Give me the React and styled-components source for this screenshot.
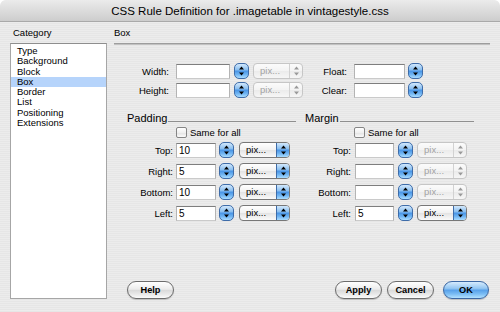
import React from "react";
import styled, { createGlobalStyle, css } from "styled-components";

const Global = createGlobalStyle`
  html, body { margin: 0; padding: 0; background: #ffffff; }
  body { width: 500px; height: 312px; overflow: hidden; font-family: "Liberation Sans", Arial, sans-serif; color: #000; }
  * { box-sizing: border-box; }
`;

const Window = styled.div`
  width: 500px;
  height: 312px;
  display: flex;
  flex-direction: column;
  border-radius: 6px 6px 0 0;
  overflow: hidden;
  background: repeating-linear-gradient(180deg, #ececec 0px, #ececec 1px, #e6e6e6 1px, #e6e6e6 2px);
`;

const TitleBar = styled.div`
  height: 22px;
  flex-shrink: 0;
  display: flex;
  align-items: center;
  justify-content: center;
  font-size: 11.5px;
  background: linear-gradient(180deg, #ebebeb 0%, #dcdcdc 50%, #cdcdcd 100%);
  border-bottom: 1px solid #a9a9a9;
  border-radius: 6px 6px 0 0;
`;

const Body = styled.div`
  flex: 1;
  display: flex;
  gap: 7px;
  padding: 4px 10px 13px 10px;
`;

const Sidebar = styled.div`
  width: 97px;
  display: flex;
  flex-direction: column;
`;

const SectionLabel = styled.div`
  height: 14px;
  line-height: 14px;
  font-size: 9.5px;
  padding-left: ${(p) => p.$indent || 0}px;
`;

const List = styled.div`
  margin-top: 3px;
  flex: 1;
  background: #fff;
  border: 1px solid #a6a6a6;
  border-top-color: #8e8e8e;
  padding-top: 2px;
`;

const ListItem = styled.div`
  height: 10.3px;
  line-height: 10.3px;
  padding-left: 6px;
  font-size: 9.5px;
  background: ${(p) => (p.$selected ? "#b6d4fb" : "transparent")};
`;

const Main = styled.div`
  flex: 1;
  display: flex;
  flex-direction: column;
`;

const Separator = styled.div`
  margin-top: 3px;
  height: 2px;
  border-top: 1px solid #9d9d9d;
  border-bottom: 1px solid #c2c2c2;
`;

const TopForm = styled.div`
  margin-top: 18px;
  display: flex;
  flex-direction: column;
  gap: 3px;
`;

const Row = styled.div`
  display: flex;
  align-items: center;
  height: 16px;
`;

const FieldLabel = styled.div`
  width: ${(p) => p.$w}px;
  margin-right: ${(p) => p.$gap}px;
  text-align: right;
  font-size: 9.5px;
  flex-shrink: 0;
  white-space: nowrap;
`;

const TextField = styled.input`
  width: ${(p) => p.$w}px;
  height: 15px;
  flex-shrink: 0;
  border: 1px solid;
  border-color: #7e7e7e #b4b4b4 #cacaca #b4b4b4;
  background: #fff;
  font-family: "Liberation Sans", Arial, sans-serif;
  font-size: 10px;
  padding: 0 2px;
  margin: 0;
  outline: none;
  color: #000;
`;

const blueGrad = css`
  background: linear-gradient(180deg, #d2e8fc 0%, #8cc0f0 40%, #4b96e6 52%, #6fb4f2 75%, #a9dcff 100%);
`;

const StepperBox = styled.div`
  width: 15px;
  height: 16px;
  flex-shrink: 0;
  margin-left: ${(p) => p.$ml}px;
  border: 1px solid #3e6ca9;
  border-radius: 5px;
  ${blueGrad};
  display: flex;
  align-items: center;
  justify-content: center;
`;

const Arrows = ({ color = "#000" }) => (
  <svg width="7" height="10" viewBox="0 0 7 10">
    <polygon points="3.5,0.5 6,3.5 1,3.5" fill={color} />
    <polygon points="1,6.5 6,6.5 3.5,9.5" fill={color} />
  </svg>
);

const Stepper = ({ ml }) => (
  <StepperBox $ml={ml}>
    <Arrows />
  </StepperBox>
);

const SelectBox = styled.div`
  width: ${(p) => p.$w}px;
  height: 16px;
  flex-shrink: 0;
  margin-left: ${(p) => p.$ml}px;
  display: flex;
  border: 1px solid ${(p) => (p.$disabled ? "#c6c6c6" : "#777")};
  border-radius: 4px;
  overflow: hidden;
  background: ${(p) =>
    p.$disabled
      ? "linear-gradient(180deg, #fbfbfb 0%, #f3f3f3 50%, #ebebeb 51%, #f6f6f6 100%)"
      : "linear-gradient(180deg, #ffffff 0%, #f1f1f1 50%, #e3e3e3 51%, #fafafa 100%)"};
`;

const SelectText = styled.div`
  flex: 1;
  font-size: 9.5px;
  line-height: 14px;
  padding-left: 6px;
  color: ${(p) => (p.$disabled ? "#a3a3a3" : "#000")};
`;

const SelectCap = styled.div`
  width: 13px;
  display: flex;
  align-items: center;
  justify-content: center;
  border-left: 1px solid ${(p) => (p.$disabled ? "#d2d2d2" : "#3e6ca9")};
  ${(p) => !p.$disabled && blueGrad};
`;

const Select = ({ w, ml, disabled }) => (
  <SelectBox $w={w} $ml={ml} $disabled={disabled}>
    <SelectText $disabled={disabled}>pix...</SelectText>
    <SelectCap $disabled={disabled}>
      <Arrows color={disabled ? "#999" : "#000"} />
    </SelectCap>
  </SelectBox>
);

const Columns = styled.div`
  margin-top: 12px;
  margin-left: 13px;
  display: flex;
  gap: 9px;
`;

const Column = styled.div`
  width: 169px;
  display: flex;
  flex-direction: column;
`;

const Heading = styled.div`
  height: 16px;
  display: flex;
  align-items: center;
  font-size: 11px;
`;

const HeadingRule = styled.div`
  flex: 1;
  height: 1px;
  margin-left: 1px;
  margin-top: 6px;
  background: #8f8f8f;
`;

const CheckRow = styled.div`
  height: 12px;
  display: flex;
  align-items: center;
  padding-left: 49px;
  font-size: 9.5px;
`;

const Checkbox = styled.div`
  width: 11px;
  height: 11px;
  border: 1px solid #858585;
  border-radius: 2px;
  background: linear-gradient(180deg, #ffffff 0%, #f0f0f0 50%, #e2e2e2 51%, #fbfbfb 100%);
  margin-right: 3px;
`;

const Fields = styled.div`
  margin-top: 4px;
  display: flex;
  flex-direction: column;
  gap: 5px;
`;

const ButtonRow = styled.div`
  margin-top: auto;
  height: 18px;
  display: flex;
  align-items: center;
  padding-left: 13px;
  padding-right: 1px;
`;

const Spacer = styled.div`
  flex: 1;
`;

const Button = styled.div`
  width: ${(p) => p.$w}px;
  height: 18px;
  margin-left: ${(p) => p.$ml || 0}px;
  border-radius: 9px;
  border: 1px solid ${(p) => (p.$primary ? "#3b67a3" : "#6c6c6c")};
  display: flex;
  align-items: center;
  justify-content: center;
  font-size: 9.2px;
  font-weight: bold;
  box-shadow: 0 1px 1px rgba(0, 0, 0, 0.18);
  background: ${(p) =>
    p.$primary
      ? "linear-gradient(180deg, #d6ebfd 0%, #93c6f2 40%, #5aa2ea 52%, #7bbdf4 75%, #b3e1ff 100%)"
      : "linear-gradient(180deg, #ffffff 0%, #ececec 45%, #dadada 52%, #e8e8e8 75%, #fbfbfb 100%)"};
`;

const categories = ["Type", "Background", "Block", "Box", "Border", "List", "Positioning", "Extensions"];

const padding = [
  { label: "Top:", value: "10" },
  { label: "Right:", value: "5" },
  { label: "Bottom:", value: "10" },
  { label: "Left:", value: "5" },
];

const margin = [
  { label: "Top:", value: "" },
  { label: "Right:", value: "" },
  { label: "Bottom:", value: "" },
  { label: "Left:", value: "5" },
];

export default function App() {
  return (
    <>
      <Global />
      <Window>
        <TitleBar>CSS Rule Definition for .imagetable in vintagestyle.css</TitleBar>
        <Body>
          <Sidebar>
            <SectionLabel $indent={3}>Category</SectionLabel>
            <List>
              {categories.map((c) => (
                <ListItem key={c} $selected={c === "Box"}>
                  {c}
                </ListItem>
              ))}
            </List>
          </Sidebar>
          <Main>
            <SectionLabel>Box</SectionLabel>
            <Separator />
            <TopForm>
              <Row>
                <FieldLabel $w={55} $gap={7}>Width:</FieldLabel>
                <TextField $w={54} readOnly value="" />
                <Stepper ml={4} />
                <Select w={50} ml={4} disabled />
                <FieldLabel $w={44} $gap={7}>Float:</FieldLabel>
                <TextField $w={51} readOnly value="" />
                <Stepper ml={3} />
              </Row>
              <Row>
                <FieldLabel $w={55} $gap={7}>Height:</FieldLabel>
                <TextField $w={54} readOnly value="" />
                <Stepper ml={4} />
                <Select w={50} ml={4} disabled />
                <FieldLabel $w={44} $gap={7}>Clear:</FieldLabel>
                <TextField $w={51} readOnly value="" />
                <Stepper ml={3} />
              </Row>
            </TopForm>
            <Columns>
              <Column>
                <Heading>
                  Padding
                  <HeadingRule />
                </Heading>
                <CheckRow>
                  <Checkbox />
                  Same for all
                </CheckRow>
                <Fields>
                  {padding.map((f) => (
                    <Row key={f.label}>
                      <FieldLabel $w={46} $gap={3}>{f.label}</FieldLabel>
                      <TextField $w={40} readOnly value={f.value} />
                      <Stepper ml={3} />
                      <Select w={51} ml={5} />
                    </Row>
                  ))}
                </Fields>
              </Column>
              <Column>
                <Heading>
                  Margin
                  <HeadingRule />
                </Heading>
                <CheckRow>
                  <Checkbox />
                  Same for all
                </CheckRow>
                <Fields>
                  {margin.map((f) => (
                    <Row key={f.label}>
                      <FieldLabel $w={46} $gap={4}>{f.label}</FieldLabel>
                      <TextField $w={39} readOnly value={f.value} />
                      <Stepper ml={4} />
                      <Select w={50} ml={4} disabled={f.value === ""} />
                    </Row>
                  ))}
                </Fields>
              </Column>
            </Columns>
            <ButtonRow>
              <Button $w={47}>Help</Button>
              <Spacer />
              <Button $w={47}>Apply</Button>
              <Button $w={47} $ml={5}>Cancel</Button>
              <Button $w={46} $ml={9} $primary>OK</Button>
            </ButtonRow>
          </Main>
        </Body>
      </Window>
    </>
  );
}
